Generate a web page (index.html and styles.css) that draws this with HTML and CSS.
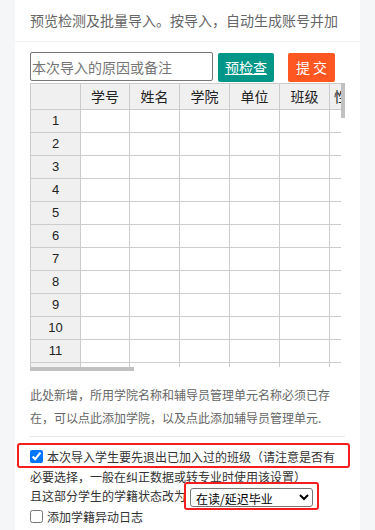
FILE: index.html
```html
<!DOCTYPE html>
<html lang="zh-CN">
<head>
    <meta charset="UTF-8">
    <meta name="viewport" content="width=device-width, initial-scale=1.0">
    <title>批量导入学生</title>
    <link rel="stylesheet" href="styles.css">
</head>
<body>
    <div class="card">
        <div class="card-header">预览检测及批量导入。按导入，自动生成账号并加</div>
        <div class="card-body">
            <div class="toolbar">
                <input type="text" class="reason" placeholder="本次导入的原因或备注">
                <a class="btn btn-check" href="#">预检查</a>
                <button class="btn btn-submit">提 交</button>
            </div>

            <div class="sheet">
                <div class="sheet-main">
                    <div class="sheet-view">
                        <div class="sheet-row sheet-head">
                            <div class="cell rh"></div><div class="cell">学号</div><div class="cell">姓名</div><div class="cell">学院</div><div class="cell">单位</div><div class="cell">班级</div><div class="cell left">性别</div><div class="cell"></div>
                        </div>
                        <div class="sheet-row"><div class="cell rh">1</div><div class="cell"></div><div class="cell"></div><div class="cell"></div><div class="cell"></div><div class="cell"></div><div class="cell"></div><div class="cell"></div></div>
                        <div class="sheet-row"><div class="cell rh">2</div><div class="cell"></div><div class="cell"></div><div class="cell"></div><div class="cell"></div><div class="cell"></div><div class="cell"></div><div class="cell"></div></div>
                        <div class="sheet-row"><div class="cell rh">3</div><div class="cell"></div><div class="cell"></div><div class="cell"></div><div class="cell"></div><div class="cell"></div><div class="cell"></div><div class="cell"></div></div>
                        <div class="sheet-row"><div class="cell rh">4</div><div class="cell"></div><div class="cell"></div><div class="cell"></div><div class="cell"></div><div class="cell"></div><div class="cell"></div><div class="cell"></div></div>
                        <div class="sheet-row"><div class="cell rh">5</div><div class="cell"></div><div class="cell"></div><div class="cell"></div><div class="cell"></div><div class="cell"></div><div class="cell"></div><div class="cell"></div></div>
                        <div class="sheet-row"><div class="cell rh">6</div><div class="cell"></div><div class="cell"></div><div class="cell"></div><div class="cell"></div><div class="cell"></div><div class="cell"></div><div class="cell"></div></div>
                        <div class="sheet-row"><div class="cell rh">7</div><div class="cell"></div><div class="cell"></div><div class="cell"></div><div class="cell"></div><div class="cell"></div><div class="cell"></div><div class="cell"></div></div>
                        <div class="sheet-row"><div class="cell rh">8</div><div class="cell"></div><div class="cell"></div><div class="cell"></div><div class="cell"></div><div class="cell"></div><div class="cell"></div><div class="cell"></div></div>
                        <div class="sheet-row"><div class="cell rh">9</div><div class="cell"></div><div class="cell"></div><div class="cell"></div><div class="cell"></div><div class="cell"></div><div class="cell"></div><div class="cell"></div></div>
                        <div class="sheet-row"><div class="cell rh">10</div><div class="cell"></div><div class="cell"></div><div class="cell"></div><div class="cell"></div><div class="cell"></div><div class="cell"></div><div class="cell"></div></div>
                        <div class="sheet-row"><div class="cell rh">11</div><div class="cell"></div><div class="cell"></div><div class="cell"></div><div class="cell"></div><div class="cell"></div><div class="cell"></div><div class="cell"></div></div>
                        <div class="sheet-row"><div class="cell rh"></div><div class="cell"></div><div class="cell"></div><div class="cell"></div><div class="cell"></div><div class="cell"></div><div class="cell"></div><div class="cell"></div></div>
                    </div>
                    <div class="vscroll"><div class="thumb"></div></div>
                </div>
                <div class="hscroll"><div class="thumb"></div></div>
            </div>

            <p class="tip">此处新增，所用学院名称和辅导员管理单元名称必须已存在，可以点此添加学院，以及点此添加辅导员管理单元.</p>

            <div class="opts">
                <label class="opt"><input type="checkbox" checked>本次导入学生要先退出已加入过的班级（请注意是否有必要选择，一般在纠正数据或转专业时使用该设置）</label>
                <div class="opt">且这部分学生的学籍状态改为<select class="status">
                        <option>在读/延迟毕业</option>
                        <option>休学</option>
                        <option>退学</option>
                        <option>已毕业</option>
                    </select></div>
                <label class="opt"><input type="checkbox">添加学籍异动日志</label>
                <div class="mark mark-1"></div>
                <div class="mark mark-2"></div>
            </div>
        </div>
    </div>
</body>
</html>
```

FILE: styles.css
```css
body {
    margin: 0;
    background-color: #f5f6f8;
    font-family: "Noto Sans CJK SC", "Microsoft YaHei", sans-serif;
    color: #333;
}
.card {
    margin: 0 15px;
    background-color: white;
}
.card-header {
    height: 41px;
    line-height: 40px;
    padding: 0 15px;
    border-bottom: 1px solid #f2f2f2;
    font-size: 14px;
    color: #666;
    overflow: hidden;
}
.card-body {
    padding: 10px 15px;
}
.toolbar {
    display: flex;
    align-items: flex-start;
}
.reason {
    box-sizing: border-box;
    width: 183px;
    height: 29px;
    margin: 0 5px 0 0;
    padding: 1px 1px;
    border: 1px solid #767676;
    border-radius: 2px;
    font-family: inherit;
    font-size: 14px;
    color: #333;
}
.reason::placeholder {
    color: #757575;
}
.btn {
    box-sizing: border-box;
    display: block;
    height: 29px;
    margin-top: 1px;
    line-height: 29px;
    border: none;
    border-radius: 2px;
    color: white;
    font-family: inherit;
    font-size: 14px;
    text-align: center;
    cursor: pointer;
}
.btn-check {
    padding: 0 7px;
    background-color: #009688;
    text-decoration: underline;
}
.btn-submit {
    width: 47px;
    margin-left: 14px;
    padding: 0;
    background-color: #ff5722;
}
.sheet {
    margin-top: 1px;
}
.sheet-main {
    display: flex;
}
.sheet-view {
    width: 311px;
    height: 284px;
    overflow: hidden;
}
.sheet-row {
    display: grid;
    grid-template-columns: 51px 49px 50px 50px 50px 50px 50px 50px;
    width: 400px;
    height: 23px;
}
.cell {
    box-sizing: border-box;
    border-right: 1px solid #ccc;
    border-bottom: 1px solid #ccc;
    font-size: 14px;
    line-height: 22px;
    text-align: center;
    color: #222;
    white-space: nowrap;
    overflow: hidden;
}
.cell.rh {
    border-left: 1px solid #ccc;
    background-color: #f0f0f0;
    font-family: "Liberation Sans", Arial, sans-serif;
    font-size: 13px;
}
.sheet-head {
    height: 27px;
}
.sheet-head .cell {
    border-top: 1px solid #ccc;
    background-color: #f0f0f0;
    line-height: 25px;
}
.sheet-head .cell.left {
    text-align: left;
    padding-left: 4px;
}
.vscroll {
    width: 4px;
    height: 284px;
}
.vscroll .thumb {
    height: 35px;
    background-color: #c1c1c1;
}
.hscroll {
    width: 315px;
    height: 4px;
}
.hscroll .thumb {
    width: 104px;
    height: 4px;
    background-color: #c1c1c1;
}
.tip {
    margin: 12px 0 0;
    padding: 0 10px 7px 0;
    border-bottom: 1px solid #e6e6e6;
    font-size: 12px;
    line-height: 23px;
    color: #666;
}
.opts {
    position: relative;
    padding: 10px 10px 0 0;
    font-size: 12px;
    line-height: 19.5px;
    color: #333;
}
.opt {
    display: block;
}
.opt input {
    width: 13px;
    height: 13px;
    margin: 0 4px 0 0;
    vertical-align: -1px;
}
.status {
    box-sizing: border-box;
    width: 123px;
    height: 19px;
    margin-left: 4px;
    padding: 0 1px;
    border: 1px solid #767676;
    border-radius: 3px;
    background-color: white;
    font-family: inherit;
    font-size: 12px;
    color: #000;
    vertical-align: middle;
}
.mark {
    position: absolute;
    box-sizing: border-box;
    border: 2px solid #f41e1e;
    border-radius: 3px;
    pointer-events: none;
}
.mark-1 {
    top: 6px;
    left: -13px;
    width: 333px;
    height: 25px;
}
.mark-2 {
    top: 45px;
    left: 154px;
    width: 135px;
    height: 28px;
}
```
